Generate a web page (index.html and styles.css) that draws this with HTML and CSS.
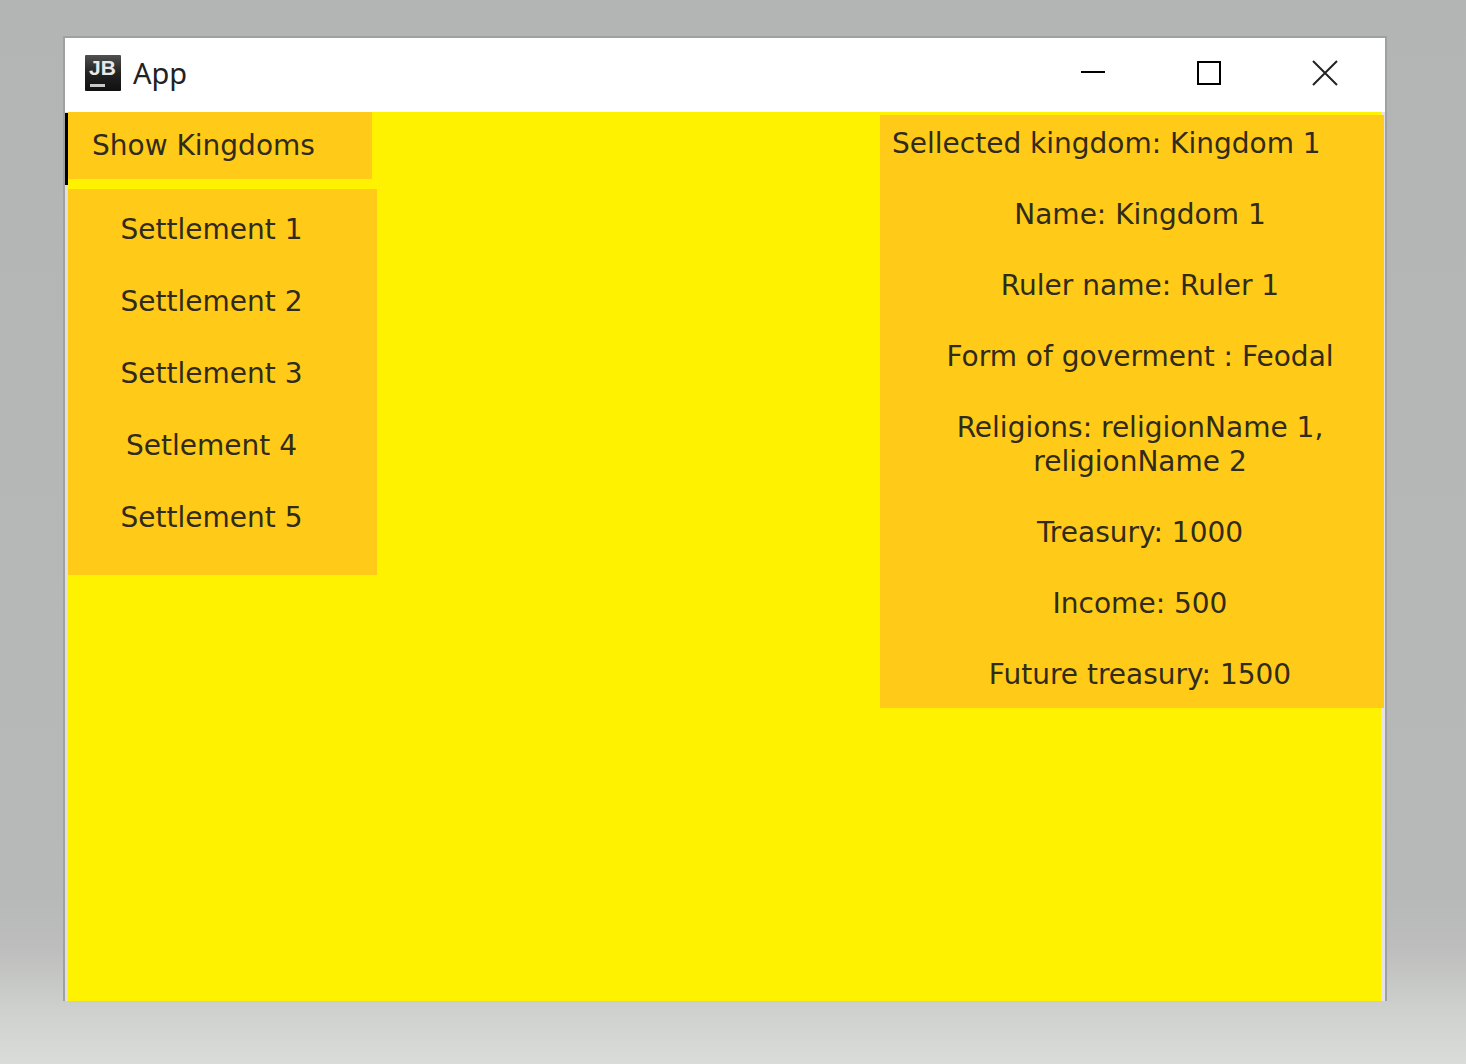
FILE: index.html
```html
<!DOCTYPE html>
<html lang="en">
<head>
<meta charset="utf-8">
<title>App</title>
<link rel="stylesheet" href="styles.css">
</head>
<body>
<main class="window">
  <header class="titlebar">
    <svg class="logo" viewBox="0 0 36 36" aria-hidden="true">
      <defs>
        <linearGradient id="logo-bg" x1="0" y1="0" x2="0" y2="1">
          <stop offset="0" stop-color="#505050"/>
          <stop offset="0.5" stop-color="#222"/>
          <stop offset="1" stop-color="#101010"/>
        </linearGradient>
      </defs>
      <rect width="36" height="36" rx="1" fill="url(#logo-bg)"/>
      <text class="logo-text" x="4" y="20">JB</text>
      <rect x="5" y="29" width="15" height="3" fill="#c8c8c8"/>
    </svg>
    <h1 class="title">App</h1>
    <div class="controls">
      <button class="control" type="button" aria-label="Minimize">
        <svg class="control-icon" viewBox="0 0 24 24"><path d="M0 11H24"/></svg>
      </button>
      <button class="control" type="button" aria-label="Maximize">
        <svg class="control-icon" viewBox="0 0 24 24"><path d="M1 1H23V23H1Z"/></svg>
      </button>
      <button class="control" type="button" aria-label="Close">
        <svg class="control-icon control-icon-close" viewBox="0 0 24 24"><path d="M0 0L24 24M24 0L0 24"/></svg>
      </button>
    </div>
  </header>
  <div class="content">
    <nav class="sidebar">
      <button class="show-kingdoms" type="button">Show Kingdoms</button>
      <ul class="settlements">
        <li><button class="settlement" type="button">Settlement 1</button></li>
        <li><button class="settlement" type="button">Settlement 2</button></li>
        <li><button class="settlement" type="button">Settlement 3</button></li>
        <li><button class="settlement" type="button">Setlement 4</button></li>
        <li><button class="settlement" type="button">Settlement 5</button></li>
      </ul>
    </nav>
    <section class="details">
      <h2 class="details-title">Sellected kingdom: Kingdom 1</h2>
      <p class="detail">Name: Kingdom 1</p>
      <p class="detail">Ruler name: Ruler 1</p>
      <p class="detail">Form of goverment : Feodal</p>
      <p class="detail">Religions: religionName 1, religionName 2</p>
      <p class="detail">Treasury: 1000</p>
      <p class="detail">Income: 500</p>
      <p class="detail">Future treasury: 1500</p>
    </section>
  </div>
</main>
</body>
</html>
```
FILE: styles.css
```css
* {
  box-sizing: border-box;
}

body {
  display: flex;
  min-height: 100vh;
  margin: 0;
  padding: 38px 81px 63px 65px;
  background: linear-gradient(#b3b5b4, #b7b9b8 84%, #bcbdbc 89%, #cfd1ce 95%, #dadcd9);
  color: #302b1c;
  font: 28px/34px Verdana, "DejaVu Sans", sans-serif;
}

h1,
h2,
p,
ul {
  margin: 0;
  padding: 0;
  font: inherit;
}

ul {
  list-style: none;
}

button {
  border: 0;
  background: none;
  color: inherit;
  font: inherit;
}

.window {
  display: flex;
  flex: 1;
  flex-direction: column;
  box-shadow: 0 0 0 2px #9fa1a0;
  clip-path: inset(-2px -2px 0 -2px);
}

.titlebar {
  display: flex;
  align-items: center;
  height: 74px;
  padding: 0 2px 4px 20px;
  background: #fff;
}

.logo {
  width: 36px;
  height: 36px;
}

.logo-text {
  fill: #e8e8e8;
  font: bold 21px "Liberation Sans", Arial, sans-serif;
}

.title {
  flex: 1;
  padding: 0 0 0 12px;
  color: #222;
  font-family: "Noto Sans", sans-serif;
  font-size: 29px;
}

.controls {
  display: flex;
}

.control {
  display: grid;
  width: 116px;
  height: 70px;
  padding: 0;
  place-items: center;
}

.control-icon {
  width: 24px;
  height: 24px;
  overflow: visible;
  fill: none;
  stroke: #000;
  stroke-width: 2;
}

.control-icon-close {
  stroke: #222;
}

.content {
  position: relative;
  display: flex;
  flex: 1;
  align-items: flex-start;
  justify-content: space-between;
  border-right: 4px solid #e4e2e6;
  border-left: 3px solid #e0dfdc;
  background: #fff200;
}

/* Focus marker beside the active button */
.content::before {
  position: absolute;
  top: 1px;
  left: -3px;
  width: 3px;
  height: 72px;
  background: #000;
  content: "";
}

.sidebar {
  display: flex;
  flex-direction: column;
  gap: 10px;
  width: 309px;
}

.show-kingdoms {
  width: 304px;
  height: 67px;
  padding: 0 24px;
  background: #ffca18;
  text-align: left;
}

.settlements {
  padding: 5px 22px 21px 0;
  background: #ffca18;
}

.settlement {
  width: 100%;
  height: 72px;
  padding: 0;
}

.details {
  display: flex;
  flex-direction: column;
  gap: 37px;
  width: 504px;
  margin: 3px -3px 0 0;
  padding: 12px 12px 16px;
  background: #ffca18;
}

.detail {
  padding: 0 24px 0 40px;
  text-align: center;
}
```
